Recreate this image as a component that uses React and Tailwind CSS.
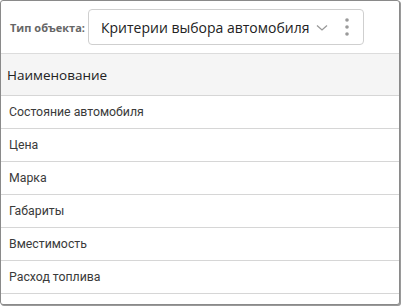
export default function App() {
  const rows = ["Состояние автомобиля", "Цена", "Марка", "Габариты", "Вместимость", "Расход топлива"];
  return (
    <div className="w-[402px] h-[307px] bg-white">
      <div className="w-[400px] h-[305px] border border-[#8a8a8a] rounded-[3px] shadow-[1px_1px_0_#9a9a9a] overflow-hidden bg-white flex flex-col">
        <div className="h-[53px] flex items-center pl-[9px] border-b border-[#dcdcdc] shrink-0">
          <span className="text-[11px] font-bold text-[#666] font-['Open_Sans',sans-serif] mr-[3px] mt-[2px] whitespace-nowrap">Тип объекта:</span>
          <div className="w-[276px] h-[36px] border border-[#cfcfcf] rounded-[4px] flex items-center pl-[12px] shrink-0">
            <span className="text-[14px] text-[#222] font-['Open_Sans',sans-serif] whitespace-nowrap">Критерии выбора автомобиля</span>
            <svg className="ml-[7px] mt-[1px] shrink-0" width="12" height="8" viewBox="0 0 12 8" fill="none">
              <path d="M1 1.5 L6 6 L11 1.5" stroke="#999" strokeWidth="1.3" />
            </svg>
            <svg className="ml-[16px] shrink-0" width="6" height="20" viewBox="0 0 6 20">
              <circle cx="3" cy="3" r="1.8" fill="#9a9a9a" />
              <circle cx="3" cy="10" r="1.8" fill="#9a9a9a" />
              <circle cx="3" cy="17" r="1.8" fill="#9a9a9a" />
            </svg>
          </div>
        </div>
        <div className="h-[42px] bg-[#f5f5f5] border-b border-[#d6d6d6] flex items-center pl-[6px] shrink-0">
          <span className="text-[13.5px] text-[#222] font-['Open_Sans',sans-serif] mt-[1px]">Наименование</span>
        </div>
        {rows.map((r) => (
          <div key={r} className="h-[33px] border-b border-[#d6d6d6] flex items-center pl-[8px] shrink-0">
            <span className="text-[12.3px] text-[#3a3a3a] font-['Roboto',sans-serif] mt-[1px]">{r}</span>
          </div>
        ))}
      </div>
    </div>
  );
}
